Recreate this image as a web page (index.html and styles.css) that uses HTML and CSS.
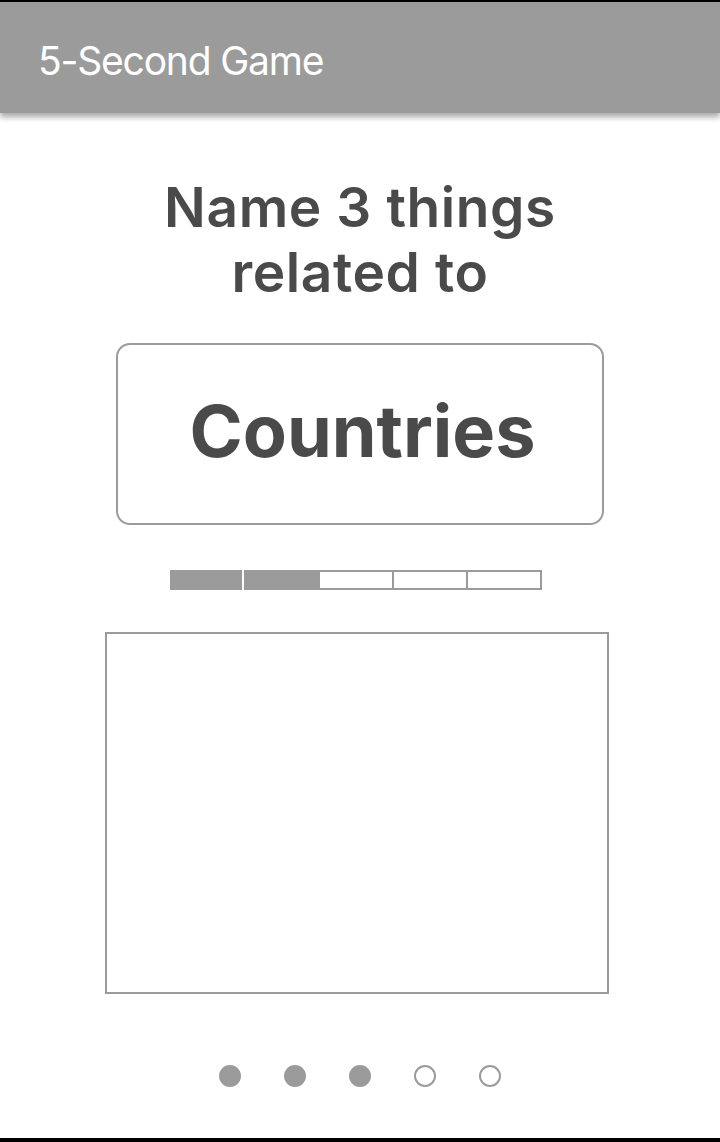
FILE: index.html
```html
<!DOCTYPE html>
<html lang="en">
<head>
<meta charset="utf-8">
<title>5-Second Game</title>
<link rel="stylesheet" href="styles.css">
</head>
<body>
<div class="screen">
  <header class="navbar">
    <h1 class="nav-title">5-Second Game</h1>
  </header>
  <main class="content">
    <h2 class="prompt">Name 3 things<br>related to</h2>
    <div class="topic-card">
      <span class="topic">Countries</span>
    </div>
    <div class="timer">
      <span class="seg seg-filled seg-first"></span>
      <span class="seg seg-filled"></span>
      <span class="seg seg-empty"></span>
      <span class="seg seg-empty seg-overlap"></span>
      <span class="seg seg-empty seg-overlap"></span>
    </div>
    <div class="answer-box"></div>
    <div class="dots">
      <span class="dot dot-on"></span>
      <span class="dot dot-on"></span>
      <span class="dot dot-on"></span>
      <span class="dot"></span>
      <span class="dot"></span>
    </div>
  </main>
</div>
</body>
</html>
```
FILE: styles.css
```css
html, body {
  margin: 0;
  padding: 0;
  background: #fff;
}

.screen {
  width: 720px;
  height: 1142px;
  box-sizing: border-box;
  border-top: 2px solid #000;
  border-bottom: 4px solid #000;
  display: flex;
  flex-direction: column;
  font-family: Inter, "Liberation Sans", sans-serif;
  overflow: hidden;
}

.navbar {
  height: 111px;
  flex: none;
  box-sizing: border-box;
  background: #9b9b9b;
  display: flex;
  align-items: center;
  padding-left: 38px;
  padding-top: 6px;
  box-shadow: 0 4px 6px rgba(0, 0, 0, 0.35);
  position: relative;
  z-index: 1;
}

.nav-title {
  margin: 0;
  color: #fff;
  font-size: 39px;
  font-weight: 400;
  letter-spacing: -1.2px;
  line-height: 1;
}

.content {
  flex: 1;
  display: flex;
  flex-direction: column;
  align-items: center;
}

.prompt {
  margin: 62px 0 0;
  color: #4a4a4a;
  font-size: 55px;
  font-weight: 600;
  letter-spacing: 0.6px;
  line-height: 65px;
  text-align: center;
}

.topic-card {
  margin-top: 38px;
  width: 488px;
  height: 182px;
  box-sizing: border-box;
  border: 2px solid #9b9b9b;
  border-radius: 14px;
  display: flex;
  align-items: center;
  justify-content: center;
}

.topic {
  color: #4a4a4a;
  font-size: 72px;
  font-weight: 700;
  line-height: 1;
  margin-left: 5px;
  margin-bottom: 7px;
}

.timer {
  margin-top: 45px;
  margin-right: 8px;
  display: flex;
  height: 20px;
}

.seg {
  display: block;
  height: 20px;
  box-sizing: border-box;
}

.seg-filled {
  width: 74px;
  background: #9b9b9b;
}

.seg-first {
  width: 72px;
  margin-right: 2px;
}

.seg-empty {
  width: 76px;
  border: 2px solid #9b9b9b;
}

.seg-overlap {
  margin-left: -2px;
}

.answer-box {
  margin-top: 42px;
  margin-right: 6px;
  width: 504px;
  height: 362px;
  box-sizing: border-box;
  border: 2px solid #9b9b9b;
}

.dots {
  margin-top: 71px;
  display: flex;
  gap: 43px;
}

.dot {
  width: 22px;
  height: 22px;
  box-sizing: border-box;
  border-radius: 50%;
  border: 2px solid #9b9b9b;
}

.dot-on {
  background: #9b9b9b;
}
```
